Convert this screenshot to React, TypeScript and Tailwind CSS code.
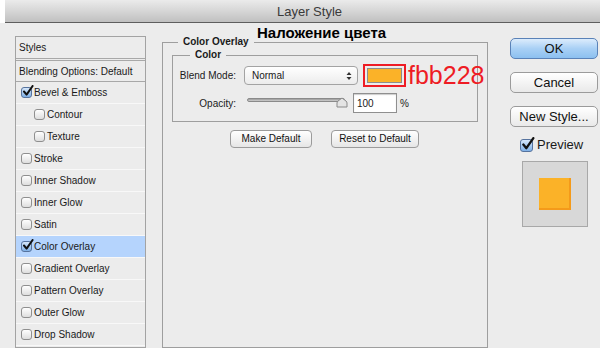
const styleRows = [
  { label: "Bevel & Emboss", checked: true },
  { label: "Contour", indent: true },
  { label: "Texture", indent: true },
  { label: "Stroke" },
  { label: "Inner Shadow" },
  { label: "Inner Glow" },
  { label: "Satin" },
  { label: "Color Overlay", checked: true, selected: true },
  { label: "Gradient Overlay" },
  { label: "Pattern Overlay" },
  { label: "Outer Glow" },
  { label: "Drop Shadow" },
]

function CheckBox({ checked, size = 11 }: { checked?: boolean; size?: number }) {
  if (!checked) {
    return (
      <span
        className="inline-block shrink-0 rounded-[3px] border border-[#8f8f8f] bg-gradient-to-b from-white to-[#dedede]"
        style={{ width: size, height: size }}
      />
    )
  }
  return (
    <span className="relative inline-block shrink-0" style={{ width: size, height: size }}>
      <span className="absolute inset-0 rounded-[3px] border border-[#56739e] bg-gradient-to-b from-[#d6e7fa] to-[#7fb0e6]" />
      <svg
        className="absolute"
        style={{ left: 1, top: -2 }}
        width={size + 1}
        height={size + 1}
        viewBox="0 0 12 12"
      >
        <path d="M2 6.5 L4.6 9.6 L10.6 1" fill="none" stroke="#111" strokeWidth="2" strokeLinecap="round" strokeLinejoin="round" />
      </svg>
    </span>
  )
}

function AquaButton({ children, primary }: { children: React.ReactNode; primary?: boolean }) {
  return (
    <button
      className={
        primary
          ? "block h-[21px] w-[88px] rounded-[5px] border border-[#5a82b8] bg-gradient-to-b from-[#dcecfc] via-[#a9d0f5] to-[#8cc0f0] text-[13px] leading-none text-[#111]"
          : "block h-[21px] w-[88px] rounded-[5px] border border-[#9b9b9b] bg-gradient-to-b from-white to-[#e9e9e9] text-[13px] leading-none text-[#111]"
      }
    >
      {children}
    </button>
  )
}

function SmallButton({ children, width }: { children: React.ReactNode; width: string }) {
  return (
    <button
      className={`h-[18px] ${width} rounded-[4px] border border-[#9b9b9b] bg-gradient-to-b from-white to-[#e6e6e6] text-[10px] leading-none text-[#111]`}
    >
      {children}
    </button>
  )
}

export default function App() {
  return (
    <div className="relative h-[351px] w-[600px] overflow-hidden bg-white font-['Liberation_Sans',Arial,sans-serif] text-[#1a1a1a]">
      {/* title bar */}
      <div className="ml-[5px] flex h-[23px] items-center justify-center border-b border-[#5e5e5e] bg-gradient-to-b from-[#ebebeb] via-[#d6d6d6] to-[#c0c0c0] pl-[14px] pt-[1px] text-[13px] text-[#3a3a3a]">
        Layer Style
      </div>

      <div className="flex h-[325px] items-start bg-[#ececec]">
        {/* left styles list */}
        <div className="ml-[15px] mt-[13px] flex h-[312px] w-[131px] flex-col border border-[#a3a3a3] text-[10px]">
          <div className="flex h-[22px] items-center border-b border-[#a8a8a8] pl-[3px]">Styles</div>
          <div className="mt-[1px] flex h-[22px] items-center border-y border-[#a8a8a8] pl-[3px]">
            Blending Options: Default
          </div>
          {styleRows.map((row) => (
            <div
              key={row.label}
              className={`flex h-[22px] items-center gap-[2px] border-b border-[#f8f8f8] ${row.indent ? "pl-[18px]" : "pl-[5px]"} ${row.selected ? "bg-[#b5d4fd]" : ""}`}
            >
              <CheckBox checked={row.checked} />
              <span>{row.label}</span>
            </div>
          ))}
        </div>

        {/* main group */}
        <fieldset className="ml-[16px] mt-[13px] h-[312px] w-[326px] border border-[#9e9e9e] text-[10px]">
          <legend className="ml-[15px] px-[5px] font-bold leading-[12px]">Color Overlay</legend>

          <fieldset className="mx-[9px] mt-[1px] border border-[#9e9e9e] pb-[8px] pl-[4px]">
            <legend className="ml-[13px] px-[5px] font-bold leading-[12px]">Color</legend>

            <div className="mt-[3px] flex items-center">
              <span className="w-[59px] text-right">Blend Mode:</span>
              <div className="ml-[8px] flex h-[19px] w-[114px] items-center justify-between rounded-[4px] border border-[#a3a3a3] bg-gradient-to-b from-white to-[#ececec] pl-[7px] pr-[5px]">
                <span>Normal</span>
                <svg width="6" height="10" viewBox="0 0 6 10">
                  <path d="M0.5 4 L3 1 L5.5 4 Z M0.5 6 L3 9 L5.5 6 Z" fill="#333" />
                </svg>
              </div>
              <div className="relative ml-[5px]">
                <div className="h-[23px] w-[43px] border-2 border-[#ee1c24] p-[2px]">
                  <div className="h-full w-full border border-[#8c8c8c] bg-[#fbb228]" />
                </div>
                <span className="absolute left-[45px] top-[-3px] text-[25px] leading-[28px] text-[#ee1c24]">fbb228</span>
              </div>
            </div>

            <div className="mt-[6px] flex items-center">
              <span className="w-[59px] text-right">Opacity:</span>
              <div className="relative ml-[11px] h-[19px] w-[100px]">
                <div className="absolute left-0 right-[2px] top-[4px] h-[4px] rounded-full border border-[#8a8a8a] bg-gradient-to-b from-[#9a9a9a] to-[#d0d0d0]" />
                <svg className="absolute left-[89px] top-[3px]" width="12" height="11" viewBox="0 0 12 11">
                  <path d="M1 10 L1 6 Q1 5 2 4 L6 1 L10 4 Q11 5 11 6 L11 10 Z" fill="#e4e4e4" stroke="#8a8a8a" />
                </svg>
              </div>
              <div className="ml-[6px] flex h-[20px] w-[44px] items-center border border-[#8f8f8f] bg-white pl-[3px] shadow-[inset_0_1px_1px_rgba(0,0,0,0.2)]">
                100
              </div>
              <span className="ml-[3px]">%</span>
            </div>
          </fieldset>

          <div className="mt-[8px] flex gap-[19px] pl-[67px]">
            <SmallButton width="w-[82px]">Make Default</SmallButton>
            <SmallButton width="w-[88px]">Reset to Default</SmallButton>
          </div>
        </fieldset>

        {/* right column */}
        <div className="ml-[22px] mt-[15px] flex w-[88px] flex-col gap-[13px]">
          <AquaButton primary>OK</AquaButton>
          <AquaButton>Cancel</AquaButton>
          <AquaButton>New Style...</AquaButton>
          <div className="-mt-[2px] flex h-[14px] items-center gap-[4px] pl-[10px] text-[13px]">
            <CheckBox checked size={13} />
            <span>Preview</span>
          </div>
          <div className="ml-[12px] -mt-[4px] flex h-[66px] w-[66px] items-center justify-center border border-[#a8a8a8] bg-[#d8d8d8]">
            <div className="h-[32px] w-[32px] border-b-2 border-r-2 border-[#f49a1a] bg-[#fbb228]" />
          </div>
        </div>
      </div>

      {/* annotation */}
      <span className="absolute left-[257px] top-[24px] text-[15px] font-bold leading-[18px] text-black">
        Наложение цвета
      </span>
    </div>
  )
}
